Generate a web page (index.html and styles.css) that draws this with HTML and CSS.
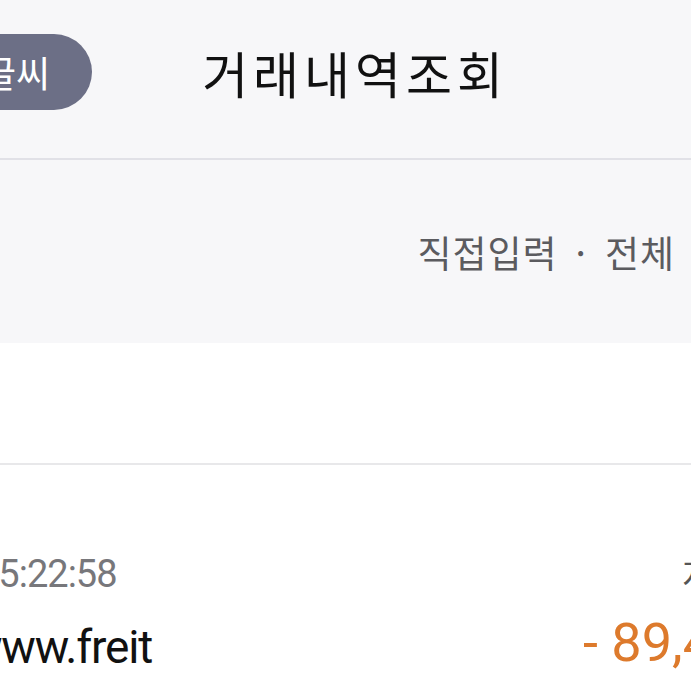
FILE: index.html
```html
<!DOCTYPE html>
<html lang="ko">
<head>
  <meta charset="UTF-8" />
  <meta name="viewport" content="width=device-width, initial-scale=1.0" />
  <title>거래내역조회</title>
  <link rel="stylesheet" href="styles.css">
</head>
<body>
  <header class="header">
    <button class="size-btn">큰글씨</button>
    <h1 class="title">거래내역조회</h1>
  </header>

  <div class="filter">
    <span>직접입력</span>
    <span class="dot">·</span>
    <span>전체</span>
  </div>

  <div class="search"></div>

  <ul class="tx-list">
    <li class="tx">
      <div class="tx-row">
        <div class="tx-date">15:22:58</div>
        <div class="tx-type">지출</div>
      </div>
      <div class="tx-row tx-row-main">
        <div class="tx-name">www.freit</div>
        <div class="tx-amount">- 89,400원</div>
      </div>
    </li>
  </ul>
</body>
</html>
```

FILE: styles.css
```css
* {
  box-sizing: border-box;
}

html, body {
  width: 691px;
  height: 691px;
}

body {
  margin: 0;
  overflow: hidden;
  background-color: #fff;
  color: #111;
  font-family: Roboto, 'Noto Sans CJK KR', sans-serif;
}

.header {
  height: 160px;
  display: flex;
  align-items: center;
  padding-bottom: 14px;
  background-color: #f7f7f9;
  border-bottom: 2px solid #e1e1e7;
}

.size-btn {
  height: 76px;
  margin-left: -82px;
  padding: 0 42px 0 30px;
  border: none;
  border-radius: 38px;
  background-color: #6c6f86;
  color: #fff;
  font-family: 'Noto Sans CJK KR', sans-serif;
  font-size: 37px;
  line-height: 1;
}

.title {
  margin: 0 0 0 110px;
  font-family: 'Noto Sans CJK KR', sans-serif;
  font-size: 50px;
  font-weight: 400;
  line-height: 1;
  letter-spacing: 5px;
  color: #111;
}

.filter {
  height: 183px;
  display: flex;
  align-items: center;
  justify-content: flex-end;
  gap: 14px;
  padding-right: 16px;
  background-color: #f7f7f9;
  font-family: 'Noto Sans CJK KR', sans-serif;
  font-size: 37px;
  letter-spacing: 1px;
  color: #5b5b5f;
}

.filter .dot {
  padding: 0 4px;
}

.search {
  height: 122px;
  border-bottom: 2px solid #e8e8ea;
}

.tx-list {
  list-style: none;
  margin: 0;
  padding: 0;
}

.tx {
  padding-top: 85px;
}

.tx-row {
  display: grid;
  grid-template-columns: 605px 1fr;
  margin-left: -22px;
  white-space: nowrap;
}

.tx-row-main {
  margin-top: 20px;
}

.tx-date {
  font-size: 38px;
  line-height: 48px;
  letter-spacing: -1px;
  color: #77777b;
}

.tx-type {
  padding-left: 99px;
  font-family: 'Noto Sans CJK KR', sans-serif;
  font-size: 34px;
  line-height: 48px;
  color: #555;
}

.tx-name {
  margin-left: -10px;
  font-size: 46px;
  line-height: 58px;
  letter-spacing: -1.2px;
  color: #111;
}

.tx-amount {
  margin-top: -7px;
  font-size: 54px;
  line-height: 64px;
  color: #dd7a2c;
}
```
